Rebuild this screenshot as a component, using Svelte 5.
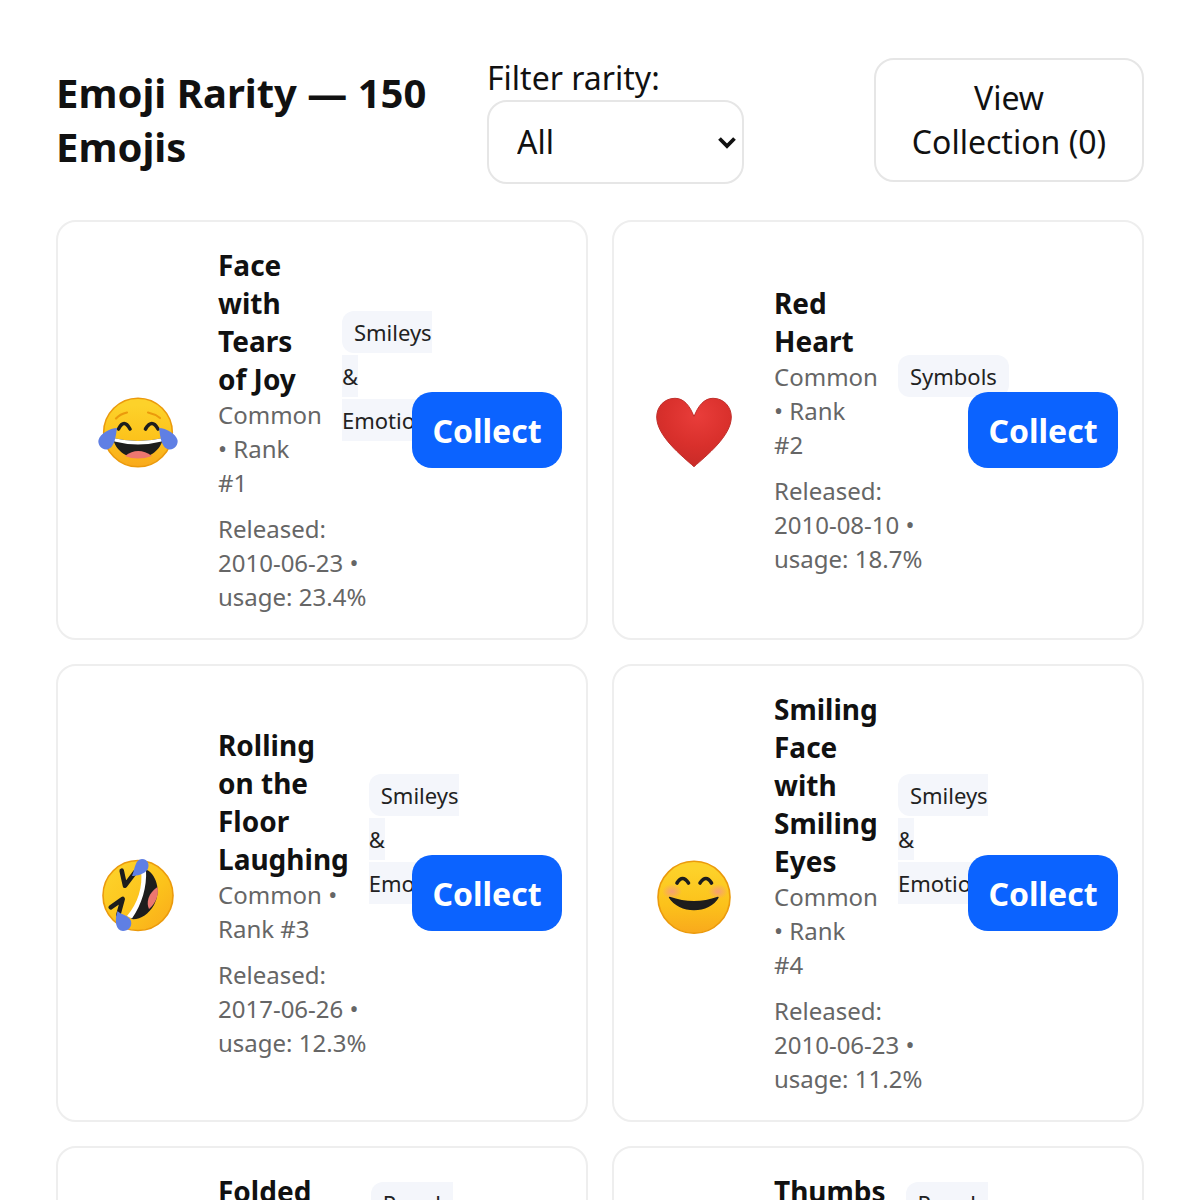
<script>
	const emojis = [
		{ icon: 'joy', name: 'Face with Tears of Joy', rarity: 'Common', rank: 1, category: 'Smileys & Emotion', released: '2010-06-23', usage: '23.4%' },
		{ icon: 'heart', name: 'Red Heart', rarity: 'Common', rank: 2, category: 'Symbols', released: '2010-08-10', usage: '18.7%' },
		{ icon: 'rofl', name: 'Rolling on the Floor Laughing', rarity: 'Common', rank: 3, category: 'Smileys & Emotion', released: '2017-06-26', usage: '12.3%' },
		{ icon: 'smile', name: 'Smiling Face with Smiling Eyes', rarity: 'Common', rank: 4, category: 'Smileys & Emotion', released: '2010-06-23', usage: '11.2%' },
		{ icon: 'pray', name: 'Folded Hands', rarity: 'Uncommon', rank: 5, category: 'People & Body', released: '2010-06-23', usage: '8.9%' },
		{ icon: 'thumb', name: 'Thumbs Up', rarity: 'Rare', rank: 6, category: 'People & Body', released: '2010-06-23', usage: '7.6%' }
	];
</script>

<div class="page">
	<header class="top">
		<h1>Emoji Rarity — 150 Emojis</h1>
		<div class="filter">
			<label for="rarity">Filter rarity:</label>
			<div class="select-wrap">
				<select id="rarity">
					<option>All</option>
					<option>Common</option>
					<option>Uncommon</option>
					<option>Rare</option>
				</select>
				<svg class="chevron" viewBox="0 0 18 14" width="18" height="14" aria-hidden="true">
					<path d="M1.5 2.5 L9 10 L16.5 2.5" fill="none" stroke="#111" stroke-width="3.8" />
				</svg>
			</div>
		</div>
		<button class="view">View Collection (0)</button>
	</header>

	<div class="grid">
		{#each emojis as e}
			<article class="card">
				<div class="glyph">
					<svg viewBox="0 0 80 80" width="80" height="80" role="img" aria-label={e.name}>
						<defs>
							<linearGradient id="face-{e.rank}" x1="0" y1="0" x2={e.icon === 'rofl' ? 1 : 0} y2="1">
								<stop offset="0.1" stop-color="#fdd22a" />
								<stop offset="0.6" stop-color="#fcc21b" />
								<stop offset="1" stop-color="#f9a91c" />
							</linearGradient>
						</defs>
						{#if e.icon === 'joy'}
							<circle cx="40" cy="42.5" r="34.3" fill="url(#face-{e.rank})" stroke="#eb9a0c" stroke-width="1.6" />
							<path d="M18 28.5 Q22 24 29 22.5 M50 22.5 Q57 24 62 28" fill="none" stroke="#eb9a0c" stroke-width="2.2" stroke-linecap="round" />
							<path d="M20.5 39 Q26 28 32 39 M47.5 39 Q54 28 60 39" fill="none" stroke="#1d1d1d" stroke-width="3.6" stroke-linecap="round" />
							<path d="M15 48 Q40 54 65 48 C63 60 52 68 40 68 C28 68 17 60 15 48Z" fill="#1d1d1d" />
							<path d="M15 48 Q40 54 65 48 L63.6 51.5 Q40 57.5 16.4 51.5Z" fill="#fff" />
							<path d="M27 66 Q40 56 54 66 Q47 68.5 40 68.5 Q33 68.5 27 66Z" fill="#ed7770" />
							<path d="M19 38 C18 43 17.5 58 9 59.5 C3 60 -0.5 54 0.5 50 C2 44 12 38 19 38Z" fill="#5f7fe4" />
							<path d="M61 38 C62 43 62.5 58 71 59.5 C77 60 80.5 54 79.5 50 C78 44 68 38 61 38Z" fill="#5f7fe4" />
						{:else if e.icon === 'heart'}
							<defs>
								<radialGradient id="heart-fill" cx="0.55" cy="0.25" r="0.8">
									<stop offset="0" stop-color="#e93d3a" />
									<stop offset="0.55" stop-color="#d9302c" />
									<stop offset="1" stop-color="#c62a27" />
								</radialGradient>
							</defs>
							<path d="M40 26.7 C36 16 30 8.3 21 8.3 C10 8.3 2.7 17 2.7 27 C2.7 46 28 66 40 76.7 C52 66 77.3 46 77.3 27 C77.3 17 70 8.3 59 8.3 C50 8.3 44 16 40 26.7Z" fill="url(#heart-fill)" stroke="#c0302c" stroke-width="1" />
						{:else if e.icon === 'rofl'}
							<circle cx="40" cy="42.5" r="35" fill="url(#face-{e.rank})" stroke="#eb9a0c" stroke-width="1.6" />
							<path d="M47 16 C58 20 64 38 56 52 C50 62 42 67 33 66 C42 50 47 34 47 16Z" fill="#1d1d1d" />
							<path d="M43 17 C45 34 40 50 29 63 L34 65.5 C44 51 49 34 48 17Z" fill="#fff" />
							<path d="M59.5 34 C61 42 58 50 51 56 C48 50 50 40 59.5 34Z" fill="#ed7770" />
							<path d="M23.7 17.7 L27 32.7 L37 19.3 M12.7 54.3 L24.7 46 L20.3 62" fill="none" stroke="#1d1d1d" stroke-width="4.6" stroke-linecap="round" stroke-linejoin="round" />
							<path d="M34 23 C37 16 37 6 44 6 C50 6 52 12 49.5 16.5 C46.5 21 39 23 34 23Z" fill="#5f7fe4" />
							<path d="M19.5 58 C23 62 31 62 33 68 C34.5 74 30 78 25 78 C18 78 16 68 19.5 58Z" fill="#5f7fe4" />
						{:else if e.icon === 'smile'}
							<defs>
								<radialGradient id="cheek-{e.rank}">
									<stop offset="0" stop-color="#f4948a" stop-opacity="0.8" />
									<stop offset="1" stop-color="#f4948a" stop-opacity="0" />
								</radialGradient>
							</defs>
							<circle cx="40" cy="44.3" r="36" fill="url(#face-{e.rank})" stroke="#eb9a0c" stroke-width="1.6" />
							<ellipse cx="18" cy="38.5" rx="10" ry="7.5" fill="url(#cheek-{e.rank})" />
							<ellipse cx="64" cy="38.5" rx="10" ry="7.5" fill="url(#cheek-{e.rank})" />
							<path d="M23 30 Q28.5 21 34.5 30 M46 30 Q52 21 57.5 30" fill="none" stroke="#1d1d1d" stroke-width="3.6" stroke-linecap="round" />
							<path d="M15.5 44.5 Q40 53 64 44.5 C60 52 50 56.5 40 56.5 C30 56.5 20 52 15.5 44.5Z" fill="#1d1d1d" stroke="#1d1d1d" stroke-width="1.4" stroke-linejoin="round" />
						{:else if e.icon === 'pray'}
							<path d="M38 12 L38 62 L22 74 L10 62 L20 50 Z" fill="#fcc21b" stroke="#eb9a0c" stroke-width="1.6" />
							<path d="M42 12 L42 62 L58 74 L70 62 L60 50 Z" fill="#fcc21b" stroke="#eb9a0c" stroke-width="1.6" />
						{:else}
							<path d="M26 36 L38 10 C44 8 48 14 46 22 L44 32 L66 32 C72 34 72 62 62 70 L26 70 Z" fill="#fcc21b" stroke="#eb9a0c" stroke-width="1.6" />
							<rect x="10" y="36" width="14" height="34" rx="3" fill="#f9a91c" />
						{/if}
					</svg>
				</div>
				<div class="info">
					<div class="head">
						<div class="names">
							<div class="name">{e.name}</div>
							<div class="meta">{e.rarity} • Rank #{e.rank}</div>
						</div>
						<div class="cat"><span class="tag">{e.category}</span></div>
					</div>
					<div class="meta released">Released: {e.released} • usage: {e.usage}</div>
				</div>
				<button class="collect">Collect</button>
			</article>
		{/each}
	</div>
</div>

<style>
	:global(body) {
		font-family: 'Noto Sans', sans-serif;
		color: #111;
		background: #fff;
	}
	.page {
		padding: 56px;
	}
	.top {
		display: flex;
		align-items: center;
		gap: 24px;
		margin-bottom: 36px;
	}
	h1 {
		flex: 0 0 407px;
		margin: 0;
		font-size: 40px;
		line-height: 54px;
		font-weight: 700;
	}
	.filter {
		flex: 1;
		font-size: 32px;
		line-height: 44px;
	}
	.filter label {
		display: block;
	}
	.select-wrap {
		position: relative;
		width: 257px;
	}
	select {
		display: block;
		appearance: none;
		width: 100%;
		height: 84px;
		box-sizing: border-box;
		padding: 0 28px;
		font: inherit;
		color: #111;
		background: #fff;
		border: 2px solid #e6e6e6;
		border-radius: 20px;
	}
	.chevron {
		position: absolute;
		right: 8px;
		top: 36px;
		pointer-events: none;
	}
	.view {
		flex: 0 0 270px;
		box-sizing: border-box;
		padding: 16px 32px;
		font: inherit;
		font-size: 32px;
		line-height: 44px;
		color: #111;
		background: #fff;
		border: 2px solid #e6e6e6;
		border-radius: 20px;
	}
	.grid {
		display: grid;
		grid-template-columns: 1fr 1fr;
		gap: 24px;
	}
	.card {
		display: flex;
		align-items: center;
		gap: 24px;
		padding: 24px;
		min-width: 0;
		border: 2px solid #eee;
		border-radius: 20px;
	}
	.glyph {
		flex: 0 0 112px;
		display: flex;
		justify-content: center;
	}
	.glyph svg {
		display: block;
		overflow: visible;
	}
	.info {
		flex: 1;
		min-width: 0;
	}
	.head {
		display: flex;
		align-items: center;
		gap: 20px;
		margin-bottom: 12px;
	}
	.names {
		flex: 0 1 0;
	}
	.name {
		font-size: 28px;
		line-height: 38px;
		font-weight: 700;
	}
	.meta {
		font-size: 24px;
		line-height: 34px;
		color: #666;
	}
	.cat {
		font-size: 32px;
		line-height: 44px;
	}
	.tag {
		padding: 6px 12px;
		font-size: 22px;
		line-height: 30px;
		color: #222;
		background: #f4f6fb;
		border-radius: 12px;
	}
	.collect {
		flex: 0 0 150px;
		height: 76px;
		padding: 0;
		font: inherit;
		font-size: 32px;
		font-weight: 700;
		color: #fff;
		background: #0b63ff;
		border: 0;
		border-radius: 20px;
		position: relative;
	}
</style>
